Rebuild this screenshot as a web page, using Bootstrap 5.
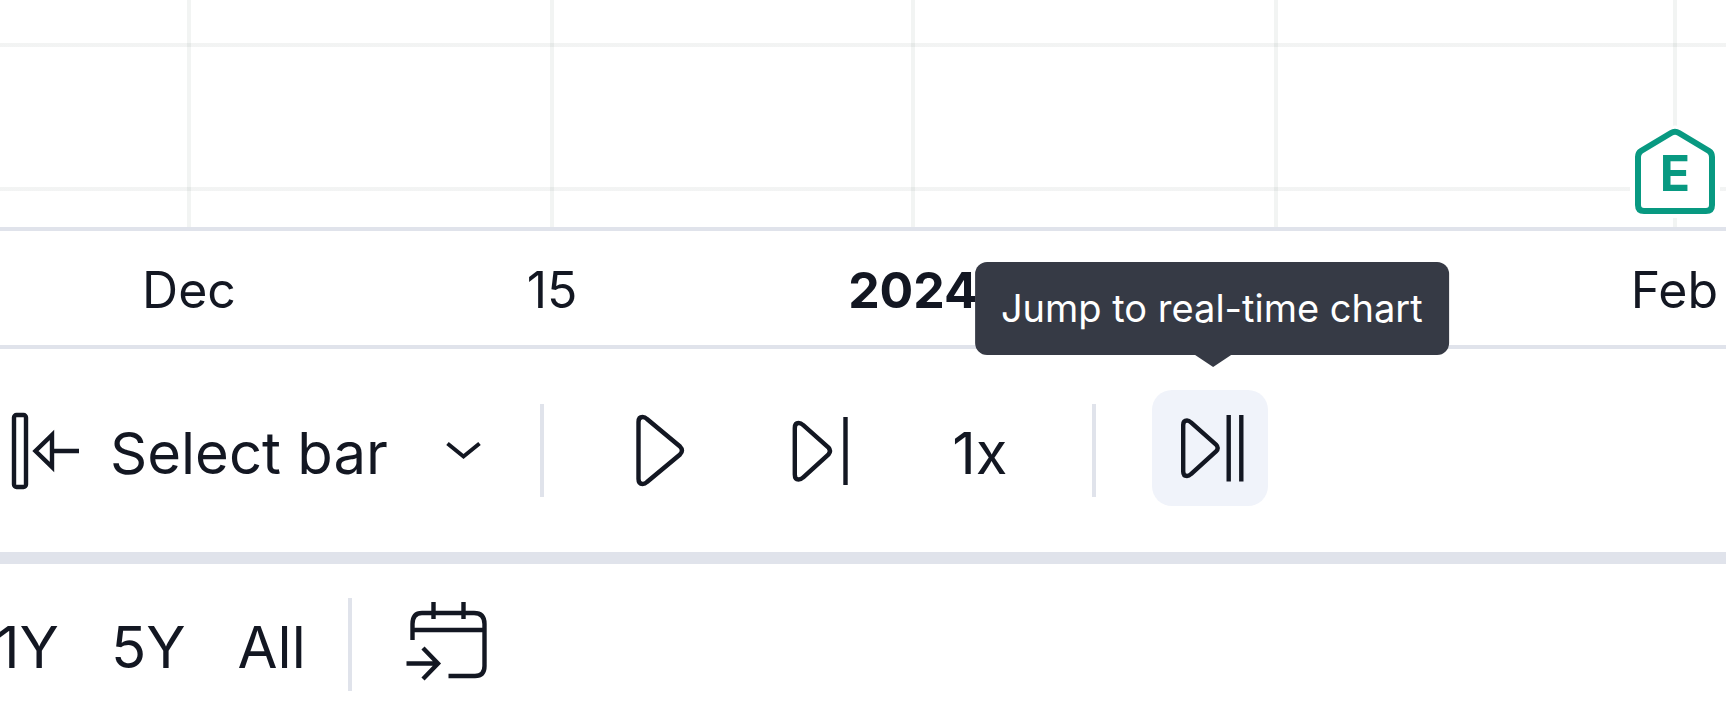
<!DOCTYPE html>
<html lang="en">
<head>
<meta charset="utf-8">
<meta name="viewport" content="width=device-width, initial-scale=1">
<title>Bar replay</title>
<link href="https://cdn.jsdelivr.net/npm/bootstrap@5.3.0/dist/css/bootstrap.min.css" rel="stylesheet">
<style>
  :root { --ink: #131722; --rule: #e0e3eb; --grid: rgba(42, 62, 57, .06); --earn: #089981; }
  body { font-family: Inter, "Liberation Sans", sans-serif; color: var(--ink); background: #fff; overflow-x: hidden; }
  svg { display: block; flex: none; fill: none; stroke: currentColor; stroke-width: 4.4; }
  .time-cols { display: grid; grid-template-columns: 378fr 348fr 374fr 352fr 274fr; }
  .chart-pane {
    height: 231px; border-bottom: 4px solid var(--rule);
    background: linear-gradient(var(--grid), var(--grid)) 0 43px / 100% 4px no-repeat,
                linear-gradient(var(--grid), var(--grid)) 0 187px / 100% 4px no-repeat;
  }
  .grid-line { width: 4px; background: var(--grid); }
  .last-line { margin-right: 49px; }
  .earnings { right: 5px; bottom: 4px; color: var(--earn); }
  .earnings span { left: 0; right: 0; top: 20px; font-size: 50px; line-height: 60px; font-weight: 700; text-align: center; }
  .time-axis { height: 118px; padding-top: 4px; border-bottom: 4px solid var(--rule); font-size: 50px; line-height: 60px; }
  .replay-bar { height: 203px; }
  .tool { border: 0; background: none; padding: 0; color: inherit; font-size: 58px; line-height: 72px; display: flex; align-items: center; text-decoration: none; white-space: nowrap; }
  .tool span { padding-top: 4px; }
  .select-bar { gap: 30px; margin-right: 30px; }
  .speed { width: 228px; padding-left: 4px; justify-content: center; }
  .divider { width: 4px; height: 93px; background: var(--rule); flex: none; }
  .pane-gap { height: 12px; background: var(--rule); }
  .jump { width: 116px; height: 116px; border-radius: 20px; background: #f0f3fa; justify-content: center; }
  .jump-wrap { margin: 0 0 6px 56px; }
  .tip { left: calc(50% + 2px); bottom: calc(100% + 35px); transform: translateX(-50%); padding: 16px 26px; border-radius: 12px; background: #363a45; color: #fff; font-size: 38px; line-height: 61px; white-space: nowrap; z-index: 2; }
  .tip::after { content: ""; position: absolute; top: 100%; left: 50%; margin-left: -17px; border: solid transparent; border-width: 12px 18px 0; border-top-color: #363a45; }
  .range-bar { padding-top: 34px; }
  .ranges { margin: 0 42px 0 -4px; gap: 52px; }
  .go-to { margin-bottom: 6px; }
</style>
</head>
<body>
<div class="min-vh-100 d-flex flex-column">

  <section class="chart-pane time-cols position-relative" aria-label="Chart">
    <div class="d-flex justify-content-center"><div class="grid-line"></div></div>
    <div class="d-flex justify-content-center"><div class="grid-line"></div></div>
    <div class="d-flex justify-content-center"><div class="grid-line"></div></div>
    <div class="d-flex justify-content-center"><div class="grid-line"></div></div>
    <div class="d-flex justify-content-end"><div class="grid-line last-line"></div></div>
    <div class="earnings position-absolute">
      <svg width="92" height="100" viewBox="0 0 92 100" aria-hidden="true">
        <path d="M8 33Q8 30 11 28L42 10.500Q46 8.500 50 10.500L81 28Q84 30 84 33V83Q84 88 79 88H13Q8 88 8 83Z" fill="#fff" stroke="#fff" stroke-width="14"/>
        <path d="M9 34Q9 30 12 28L42 10Q46 7.500 50 10L80 28Q83 30 83 34V82Q83 88 77 88H15Q9 88 9 82Z" stroke-width="6"/>
      </svg>
      <span class="position-absolute">E</span>
    </div>
  </section>

  <div class="time-axis time-cols align-items-center text-center">
    <div>Dec</div>
    <div>15</div>
    <div class="fw-bold">2024</div>
    <div></div>
    <div class="text-end pe-2">Feb</div>
  </div>

  <div class="replay-bar d-flex align-items-center" role="toolbar" aria-label="Replay">
    <button class="tool select-bar" type="button">
      <svg width="80" height="80" viewBox="0 0 80 80" aria-hidden="true">
        <rect x="14" y="4" width="12" height="72" rx="2.500"/>
        <path d="M52 24V56L35.500 40ZM52 40H79"/>
      </svg>
      <span>Select bar</span>
      <svg width="92" height="40" viewBox="0 0 92 40" aria-hidden="true"><path d="M29.500 12.500L45.500 25.500L61.500 12.500" stroke-width="4"/></svg>
    </button>
    <div class="divider"></div>
    <button class="tool" type="button" aria-label="Play">
      <svg width="160" height="80" viewBox="544 410 160 80"><path d="M638.500 421Q638.500 416 642.500 416Q645 416 647 418L680 445.500Q684 449.500 680 453.500L647 481Q645 483 642.500 483Q638.500 483 638.500 478Z"/></svg>
    </button>
    <button class="tool" type="button" aria-label="Forward">
      <svg width="160" height="80" viewBox="704 410 160 80"><path d="M794.800 427Q794.800 422 798.500 422Q801 422 803 424L828.500 446.500Q831.500 450 828.500 453.500L803 476.500Q801 478.500 798.500 478.500Q794.800 478.500 794.800 473.500ZM845.500 416V484"/></svg>
    </button>
    <button class="tool speed" type="button"><span>1x</span></button>
    <div class="divider"></div>
    <div class="jump-wrap position-relative">
      <button class="tool jump" type="button" aria-label="Jump to real-time chart" aria-describedby="jump-tip">
        <svg width="116" height="116" viewBox="1152 390 116 116"><path d="M1183.200 425Q1183.200 420.500 1187 420.500Q1189 420.500 1191 422.500L1216 444.500Q1219.500 448 1216 451.500L1191 474Q1189 476 1187 476Q1183.200 476 1183.200 471.500ZM1228.700 415V481.500M1241.300 415V481.500"/></svg>
      </button>
      <div class="tip position-absolute" id="jump-tip" role="tooltip">Jump to real-time chart</div>
    </div>
  </div>

  <div class="pane-gap"></div>

  <div class="range-bar d-flex align-items-center">
    <nav class="ranges d-flex" aria-label="Date range">
      <a class="tool" href="#"><span>1Y</span></a>
      <a class="tool" href="#"><span>5Y</span></a>
      <a class="tool" href="#"><span>All</span></a>
    </nav>
    <div class="divider"></div>
    <button class="tool go-to ms-5" type="button" aria-label="Go to date">
      <svg width="92" height="84" viewBox="400 600 92 84"><path d="M412.500 640V624Q412.500 613 422 613H474Q484.500 613 484.500 624V666Q484.500 676 475 676H448.500M412.500 630H484.500M433.500 602V619M463.500 602V619M406.500 663.500H438M423 648L438 663.500L423 679"/></svg>
    </button>
  </div>

</div>
<script src="https://cdn.jsdelivr.net/npm/bootstrap@5.3.0/dist/js/bootstrap.bundle.min.js"></script>
</body>
</html>
